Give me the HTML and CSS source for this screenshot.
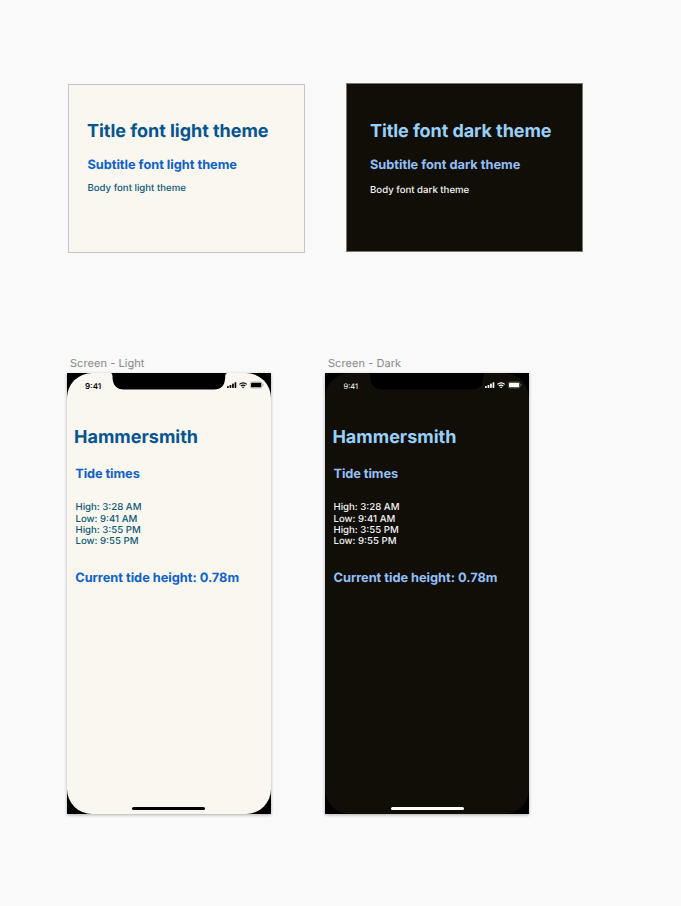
FILE: index.html
```html
<!DOCTYPE html>
<html lang="en">
<head>
<meta charset="utf-8">
<title>Tide times themes</title>
<link rel="stylesheet" href="styles.css">
</head>
<body>
<svg class="defs" width="0" height="0" aria-hidden="true">
  <defs>
    <symbol id="status" viewBox="0 0 38 8">
      <rect x="0" y="5" width="1.7" height="2" rx=".4"/>
      <rect x="2.6" y="4" width="1.7" height="3" rx=".4"/>
      <rect x="5.1" y="2.6" width="1.7" height="4.4" rx=".4"/>
      <rect x="7.6" y="1.2" width="1.7" height="5.8" rx=".4"/>
      <path d="M12.4 3.4Q16.1 .2 19.8 3.4M13.9 5Q16.1 3.2 18.3 5" fill="none" stroke="currentColor" stroke-width="1.15"/>
      <path d="M14.9 6.1Q16.1 5.2 17.3 6.1L16.1 7.3Z"/>
      <rect x="23.2" y=".9" width="11.8" height="6.2" rx="1.7" fill="none" stroke="currentColor" stroke-width=".5" opacity=".45"/>
      <rect x="24" y="1.7" width="10.2" height="4.6" rx=".9"/>
      <path d="M35.7 3V5Q36.5 4.7 36.5 4T35.7 3Z" opacity=".5"/>
    </symbol>
    <symbol id="notch" viewBox="0 0 116 17">
      <path d="M0 0Q1.3 .3 1.5 3V4.5Q2 16.5 13 16.5H103Q113.7 16.5 114.2 4.5V3Q114.4 .3 116 0Z"/>
    </symbol>
  </defs>
</svg>
<main class="board">
  <section class="samples">
    <article class="sample light">
      <h1 class="title">Title font light theme</h1>
      <h2 class="subtitle">Subtitle font light theme</h2>
      <p class="body">Body font light theme</p>
    </article>
    <article class="sample dark">
      <h1 class="title">Title font dark theme</h1>
      <h2 class="subtitle">Subtitle font dark theme</h2>
      <p class="body">Body font dark theme</p>
    </article>
  </section>
  <section class="screens">
    <figure class="frame">
      <figcaption class="label">Screen - Light</figcaption>
      <div class="phone light">
        <div class="display">
          <header class="bar"><span class="clock">9:41</span><svg class="notch"><use href="#notch"/></svg><svg class="status"><use href="#status"/></svg></header>
          <h1 class="title place">Hammersmith</h1>
          <h2 class="subtitle times">Tide times</h2>
          <ul class="body list"><li>High: 3:28 AM</li><li>Low: 9:41 AM</li><li>High: 3:55 PM</li><li>Low: 9:55 PM</li></ul>
          <h2 class="subtitle current">Current tide height: 0.78m</h2>
          <div class="home"></div>
        </div>
      </div>
    </figure>
    <figure class="frame">
      <figcaption class="label">Screen - Dark</figcaption>
      <div class="phone dark">
        <div class="display">
          <header class="bar"><span class="clock">9:41</span><svg class="notch"><use href="#notch"/></svg><svg class="status"><use href="#status"/></svg></header>
          <h1 class="title place">Hammersmith</h1>
          <h2 class="subtitle times">Tide times</h2>
          <ul class="body list"><li>High: 3:28 AM</li><li>Low: 9:41 AM</li><li>High: 3:55 PM</li><li>Low: 9:55 PM</li></ul>
          <h2 class="subtitle current">Current tide height: 0.78m</h2>
          <div class="home"></div>
        </div>
      </div>
    </figure>
  </section>
</main>
</body>
</html>
```
FILE: styles.css
```css
* { box-sizing: border-box; margin: 0; padding: 0; }
body { background: #f9f9f9; font-family: Inter, "Liberation Sans", sans-serif; text-rendering: geometricPrecision; }
.defs { display: block; height: 0; }
.board { width: 681px; height: 906px; overflow: hidden; padding-top: 83px; }
.light { --bg: #faf7f0; --title: #05558f; --sub: #0f62c6; --text: #0b5876; --ink: #000; }
.dark { --bg: #100e07; --title: #98d0fa; --sub: #94bff8; --text: #f4f6f6; --ink: #fff; }
.title, .subtitle, .body { white-space: nowrap; }
.title { color: var(--title); font-size: 18px; font-weight: 700; line-height: 22px; letter-spacing: -.03px; }
.subtitle { color: var(--sub); font-size: 12.8px; font-weight: 700; line-height: 16px; letter-spacing: -.02px; }
.body { color: var(--text); font-size: 9.65px; font-weight: 500; line-height: 12px; }

.samples { display: flex; gap: 41px; align-items: flex-start; padding-left: 68px; height: 274px; }
.sample { width: 237px; height: 169px; background: var(--bg); border: 1px solid #c4c4c4; padding: 36px 0 0 18.4px; }
.sample.light { margin-top: 1px; }
.sample.light .title { margin-left: -.4px; }
.sample.dark { border-color: #77766f; padding: 37px 0 0 23px; }
.sample.dark .title { letter-spacing: -.08px; }
.sample .subtitle { margin-top: 15px; }
.sample .body { margin-top: 9px; }
.sample.dark .body { margin-top: 11px; }

.screens { display: flex; gap: 54px; padding-left: 67px; }
.label { height: 16px; padding-left: 3px; color: #888; font-size: 11px; line-height: 12px; letter-spacing: .06px; white-space: nowrap; }
.phone { width: 204px; height: 441px; background: #000; box-shadow: 0 1px 3px rgba(0,0,0,.3); }
.display { display: flex; flex-direction: column; align-items: flex-start; height: 441px; background: var(--bg); border-radius: 25px; padding-bottom: 4px; }
.bar { display: flex; align-items: flex-start; width: 100%; height: 54px; color: var(--ink); }
.clock { width: 44px; padding: 7px 0 0 18px; font-size: 8px; line-height: 12px; font-weight: 600; }
.dark .clock { font-weight: 400; font-size: 7.5px; padding: 8px 0 0 18.5px; }
.notch { flex: none; width: 116px; height: 17px; fill: #000; }
.status { flex: none; width: 38px; height: 8px; margin: 8px 0 0 0; fill: currentColor; }
.place { margin-left: 7px; letter-spacing: 0; }
.dark .place { margin-left: 7.4px; }
.times { margin: 18px 0 0 8.2px; letter-spacing: -.08px; }
.list { list-style: none; margin: 19px 0 0 8.5px; line-height: 11.4px; }
.list li:first-child { margin-bottom: .6px; }
.list li + li { line-height: 11.2px; }
.current { margin: 23px 0 0 8.2px; }
.dark .times, .dark .current { margin-left: 8.5px; }
.home { width: 73px; height: 3px; margin: auto 0 0 65px; border-radius: 2px; background: var(--ink); }
.dark .home { margin-left: 66px; }
```
